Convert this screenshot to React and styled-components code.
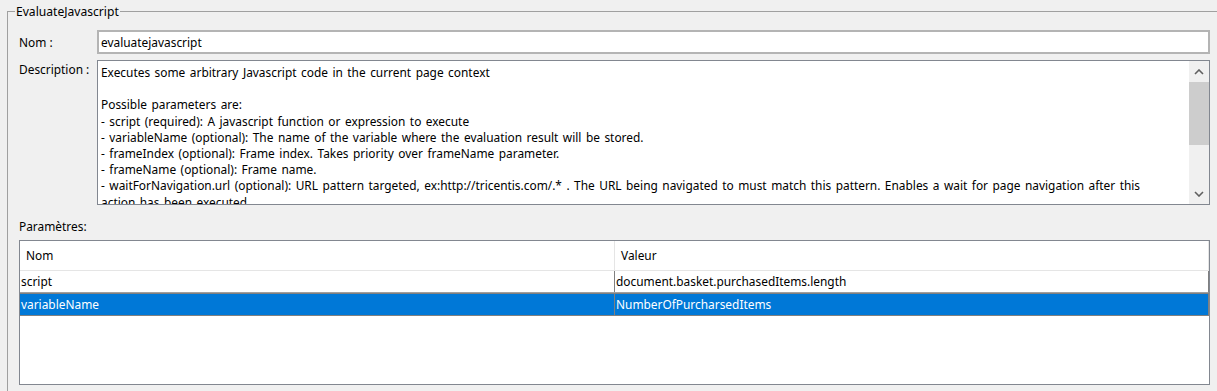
import React from "react";
import styled, { createGlobalStyle } from "styled-components";

const GlobalStyle = createGlobalStyle`
  html, body {
    margin: 0;
    padding: 0;
    background: #f0f0f0;
    overflow: hidden;
  }
  body {
    font-family: "Noto Sans", "DejaVu Sans", sans-serif;
    font-size: 11.9px;
    color: #000;
  }
`;

const Page = styled.div`
  height: 391px;
  overflow: hidden;
  padding-top: 4px;
  box-sizing: border-box;
`;

const Group = styled.fieldset`
  margin: 0 -30px 0 7px;
  padding: 11px 0 40px 8px;
  border: 1px solid #a0a0a0;
  min-height: 420px;
  box-sizing: border-box;
`;

const Legend = styled.legend`
  padding: 0 1px;
  margin-left: -1px;
  line-height: 15px;
  font-size: 12.1px;
`;

const Content = styled.div`
  width: 1191px;
  margin-left: 3px;
  display: flex;
  flex-direction: column;
`;

const FormGrid = styled.div`
  display: grid;
  grid-template-columns: 78px 1fr;
  row-gap: 6px;
`;

const Label = styled.label`
  line-height: ${(p) => (p.$tall ? "15px" : "24px")};
  margin-top: ${(p) => (p.$tall ? "2px" : "0")};
  white-space: nowrap;
`;

const TextInput = styled.div`
  height: 24px;
  box-sizing: border-box;
  border: 2px solid #b4b4b4;
  background: #fff;
  padding-left: 2px;
  line-height: 20px;
  white-space: nowrap;
`;

const TextArea = styled.div`
  height: 145px;
  box-sizing: border-box;
  border: 1px solid #828790;
  background: #fff;
  display: flex;
`;

const TextBody = styled.div`
  flex: 1;
  overflow: hidden;
  padding: 3px 3px 0;
  line-height: 16.2px;
  word-spacing: 1.4px;
`;

const TextLine = styled.div`
  white-space: pre;
  height: 16.2px;
`;

const ScrollBar = styled.div`
  width: 20px;
  background: #f0f0f0;
  display: flex;
  flex-direction: column;
`;

const ArrowButton = styled.div`
  height: 21px;
  display: flex;
  align-items: center;
  justify-content: center;
`;

const Thumb = styled.div`
  height: 63px;
  background: #cdcdcd;
`;

const Spacer = styled.div`
  flex: 1;
`;

const SectionLabel = styled.div`
  line-height: 15px;
  margin: 14px 0 6px;
`;

const Table = styled.div`
  height: 145px;
  box-sizing: border-box;
  border: 1px solid #828790;
  background: #fff;
  display: flex;
  flex-direction: column;
`;

const Row = styled.div`
  display: grid;
  grid-template-columns: 594px 1fr;
  height: ${(p) => (p.$header ? "29px" : "21px")};
  line-height: ${(p) => (p.$header ? "29px" : "21px")};
  background: ${(p) => (p.$selected ? "#0078d7" : "#fff")};
  color: ${(p) => (p.$selected ? "#fff" : "#000")};
  border-top: ${(p) => (p.$selected ? "1px solid #808080" : "0")};
  border-bottom: 1px solid
    ${(p) => (p.$header ? "#e5e5e5" : p.$selected ? "#808080" : "#a0a0a0")};
  border-right: 1px solid ${(p) => (p.$header ? "#e5e5e5" : "#808080")};
`;

const Cell = styled.div`
  padding-left: ${(p) => (p.$header ? "6px" : "1px")};
  border-left: ${(p) =>
    p.$first ? "0" : p.$header ? "1px solid #e5e5e5" : "1px solid #808080"};
  white-space: nowrap;
  overflow: hidden;
`;

const Chevron = ({ down }) => (
  <svg width="10" height="6" viewBox="0 0 10 6">
    <path
      d={down ? "M1 1 L5 5 L9 1" : "M1 5 L5 1 L9 5"}
      fill="none"
      stroke="#606060"
      strokeWidth="1.6"
    />
  </svg>
);

const lines = [
  "Executes some arbitrary Javascript code in the current page context",
  "",
  "Possible parameters are:",
  "- script (required): A javascript function or expression to execute",
  "- variableName (optional): The name of the variable where the evaluation result will be stored.",
  "- frameIndex (optional): Frame index. Takes priority over frameName parameter.",
  "- frameName (optional): Frame name.",
  "- waitForNavigation.url (optional): URL pattern targeted, ex:http://tricentis.com/.* . The URL being navigated to must match this pattern. Enables a wait for page navigation after this",
  "action has been executed",
];

const params = [
  { name: "script", value: "document.basket.purchasedItems.length" },
  { name: "variableName", value: "NumberOfPurcharsedItems", selected: true },
];

export default function App() {
  return (
    <Page>
      <GlobalStyle />
      <Group>
        <Legend>EvaluateJavascript</Legend>
        <Content>
          <FormGrid>
            <Label>Nom :</Label>
            <TextInput>evaluatejavascript</TextInput>
            <Label $tall>Description :</Label>
            <TextArea>
              <TextBody>
                {lines.map((l, i) => (
                  <TextLine key={i}>{l}</TextLine>
                ))}
              </TextBody>
              <ScrollBar>
                <ArrowButton>
                  <Chevron />
                </ArrowButton>
                <Thumb />
                <Spacer />
                <ArrowButton>
                  <Chevron down />
                </ArrowButton>
              </ScrollBar>
            </TextArea>
          </FormGrid>
          <SectionLabel>Paramètres:</SectionLabel>
          <Table>
            <Row $header>
              <Cell $header $first>
                Nom
              </Cell>
              <Cell $header>Valeur</Cell>
            </Row>
            {params.map((p) => (
              <Row key={p.name} $selected={p.selected}>
                <Cell $first>{p.name}</Cell>
                <Cell>{p.value}</Cell>
              </Row>
            ))}
          </Table>
        </Content>
      </Group>
    </Page>
  );
}
